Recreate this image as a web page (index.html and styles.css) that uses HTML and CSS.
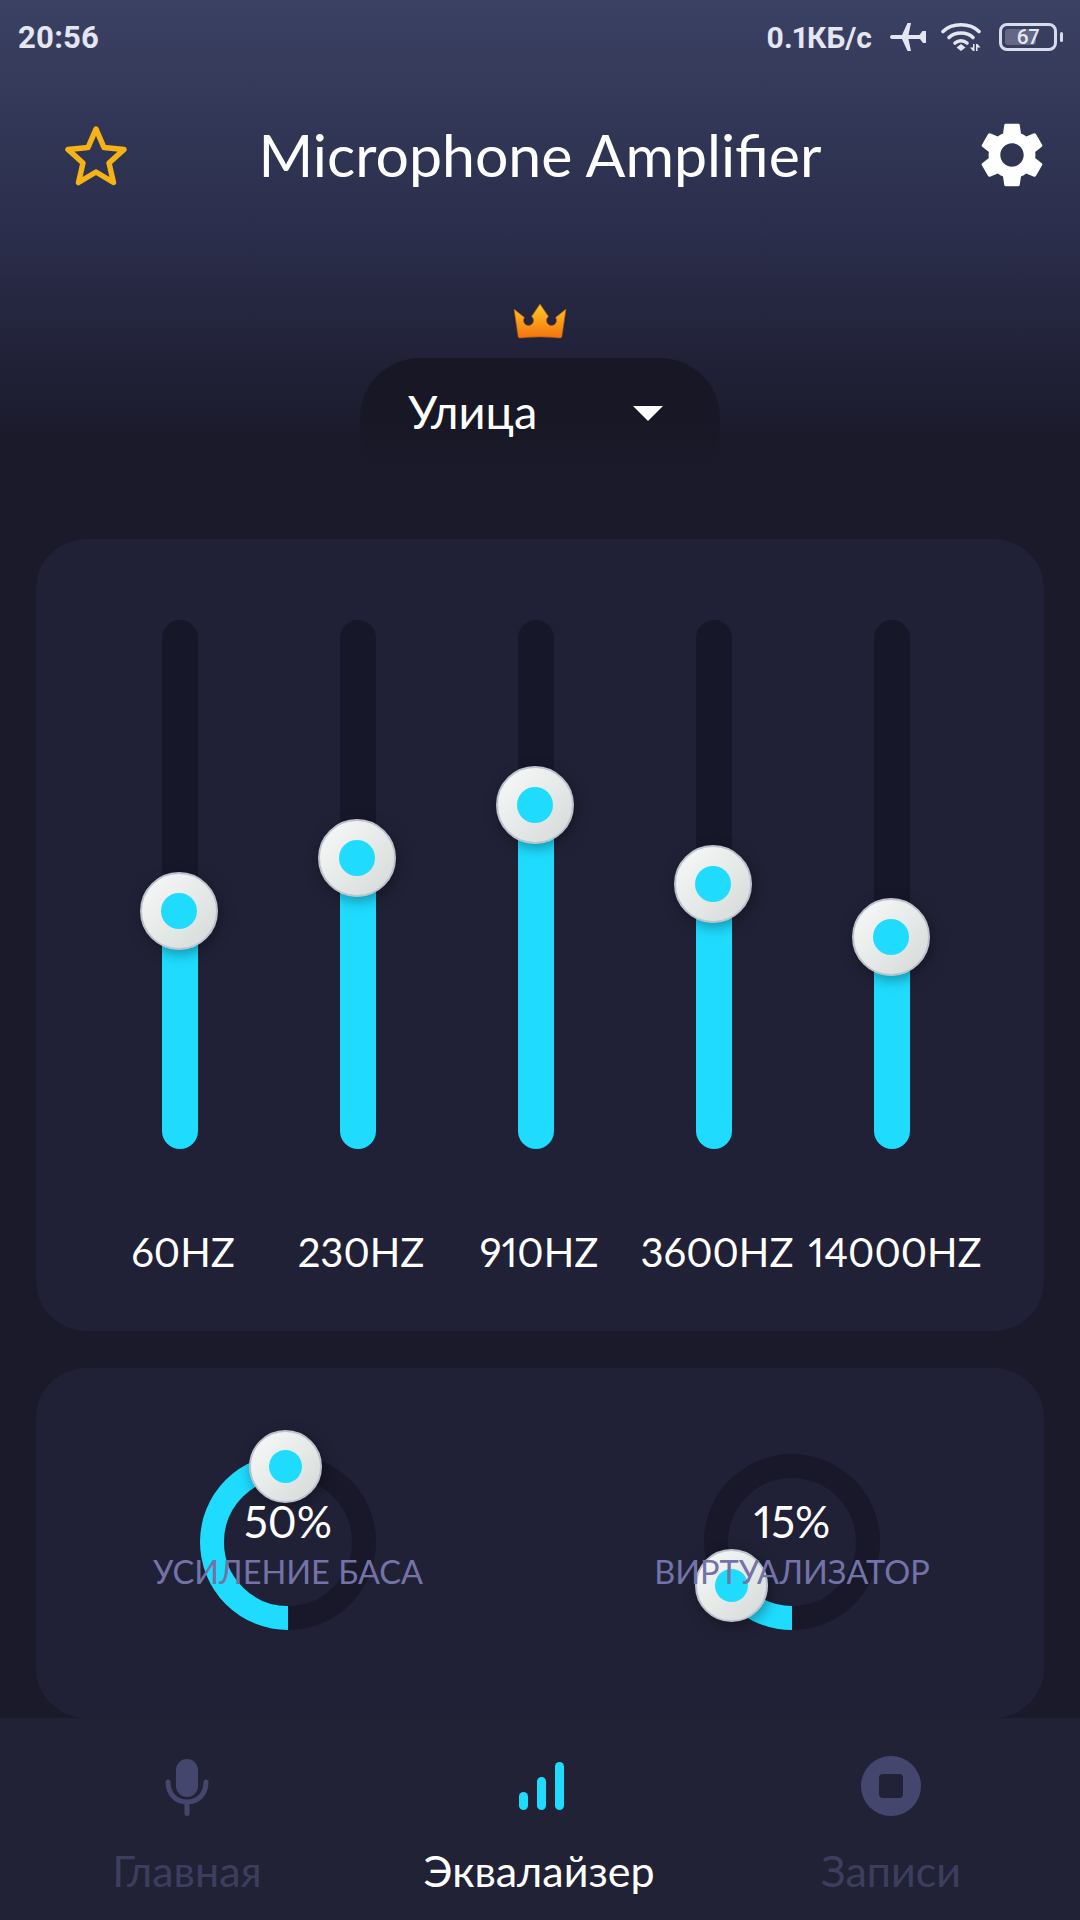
FILE: index.html
```html
<!DOCTYPE html>
<html lang="ru">
<head>
  <meta charset="UTF-8">
  <title>Microphone Amplifier</title>
  <link rel="stylesheet" href="styles.css">
</head>
<body>
  <div class="status">
    <span class="clock">20:56</span>
    <div class="status-right">
      <span class="speed">0.1КБ/с</span>
      <svg class="ic-plane" width="36" height="30" viewBox="0 0 36 30">
        <path fill="#e4e6f2" d="M0 15c0-1.300 1-2 2-2h10L17.500 1h3.500l-2.500 12h11l3-4h3.500v12H33l-3-4H18.500L21 29h-3.500L12 17H2c-1 0-2-.7-2-2z"/>
      </svg>
      <svg class="ic-wifi" width="44" height="30" viewBox="0 0 44 30">
        <g fill="none" stroke="#e4e6f2" stroke-width="3.600" stroke-linecap="round">
          <path d="M2 9.500C11 .5 29 .5 38 9.500"/>
          <path d="M8 15.500c6-6 18-6 24 0"/>
          <path d="M14 21c3.500-3 8.500-3 12 0"/>
        </g>
        <path fill="#e4e6f2" d="M20 22l4.500 3.500L20 29l-4.500-3.500z"/>
        <path fill="#e4e6f2" d="M32 22h1.500v7H32l-3-3.500h3zM35 22h1.500l3 3.500h-3V29H35z"/>
      </svg>
      <div class="battery">
        <div class="battery-body"><span class="battery-level"></span><span class="battery-num">67</span></div>
        <span class="battery-nub"></span>
      </div>
    </div>
  </div>

  <header class="header">
    <svg class="star" width="64" height="62" viewBox="0 0 64 62">
      <path fill="none" stroke="#f5b316" stroke-width="5.500" stroke-linejoin="round" d="M32 5l8 18.500 20 2-15 13.500 4.500 19.500L32 48l-17.500 10.500L19 39 4 25.500l20-2z"/>
    </svg>
    <h1 class="title">Microphone Amplifier</h1>
    <svg class="gear" width="78" height="78" viewBox="0 0 24 24">
      <path fill="#fff" d="M19.140 12.940c.04-.3.06-.61.06-.94 0-.32-.02-.64-.07-.94l2.030-1.580c.18-.14.23-.41.12-.61l-1.920-3.320c-.12-.22-.37-.29-.59-.22l-2.390.96c-.5-.38-1.030-.7-1.620-.94l-.36-2.540c-.04-.24-.24-.41-.48-.41h-3.840c-.24 0-.43.17-.47.41l-.36 2.540c-.59.24-1.130.57-1.620.94l-2.390-.96c-.22-.08-.47 0-.59.22L2.740 8.870c-.12.21-.08.47.12.61l2.030 1.580c-.05.3-.09.63-.09.94s.02.64.07.94l-2.030 1.580c-.18.14-.23.41-.12.61l1.920 3.320c.12.22.37.29.59.22l2.390-.96c.5.38 1.030.7 1.620.94l.36 2.540c.05.24.24.41.48.41h3.840c.24 0 .44-.17.47-.41l.36-2.540c.59-.24 1.130-.56 1.620-.94l2.390.96c.22.08.47 0 .59-.22l1.920-3.320c.12-.22.07-.47-.12-.61l-2.010-1.580zM12 15.600c-1.980 0-3.600-1.620-3.600-3.600s1.620-3.600 3.600-3.600 3.600 1.620 3.600 3.600-1.620 3.600-3.600 3.600z"/>
    </svg>
  </header>

  <div class="crown">
    <svg width="56" height="37" viewBox="0 0 56 37">
      <defs>
        <linearGradient id="crownFill" x1="0" y1="0" x2="0" y2="1">
          <stop offset="0" stop-color="#ffc928"/>
          <stop offset="1" stop-color="#f5720e"/>
        </linearGradient>
      </defs>
      <path fill="url(#crownFill)" stroke="#a8500f" stroke-width=".6" d="M28 1l8.500 12.500a5 5 0 1 0 7 1L54 6l-4 27c-.2 1.500-1 2-2.500 2-13-1.500-26-1.500-39 0-1.500 0-2.300-.5-2.500-2L2 6l10.500 8.500a5 5 0 1 0 7-1z"/>
    </svg>
  </div>

  <div class="preset">
    <span class="preset-name">Улица</span>
    <span class="preset-arrow"></span>
  </div>

  <section class="panel eq">
    <div class="sliders">
      <div class="band">
        <div class="track">
          <div class="fill" style="height: 238px"></div>
          <div class="thumb" style="bottom: 199px"><span class="dot"></span></div>
        </div>
        <span class="band-label">60HZ</span>
      </div>
      <div class="band">
        <div class="track">
          <div class="fill" style="height: 291px"></div>
          <div class="thumb" style="bottom: 252px"><span class="dot"></span></div>
        </div>
        <span class="band-label">230HZ</span>
      </div>
      <div class="band">
        <div class="track">
          <div class="fill" style="height: 344px"></div>
          <div class="thumb" style="bottom: 305px"><span class="dot"></span></div>
        </div>
        <span class="band-label">910HZ</span>
      </div>
      <div class="band">
        <div class="track">
          <div class="fill" style="height: 265px"></div>
          <div class="thumb" style="bottom: 226px"><span class="dot"></span></div>
        </div>
        <span class="band-label">3600HZ</span>
      </div>
      <div class="band">
        <div class="track">
          <div class="fill" style="height: 212px"></div>
          <div class="thumb" style="bottom: 173px"><span class="dot"></span></div>
        </div>
        <span class="band-label">14000HZ</span>
      </div>
    </div>
  </section>

  <section class="panel fx">
    <div class="knob">
      <svg class="ring" width="176" height="176" viewBox="0 0 176 176">
        <circle class="ring-bg" cx="88" cy="88" r="76"/>
        <circle class="ring-value" cx="88" cy="88" r="76" stroke-dasharray="238.800 477.500" transform="rotate(90 88 88)"/>
      </svg>
      <div class="thumb small" style="left: 85px; top: 12px"><span class="dot"></span></div>
      <span class="knob-value">50%</span>
      <span class="knob-label">УСИЛЕНИЕ БАСА</span>
    </div>
    <div class="knob">
      <svg class="ring" width="176" height="176" viewBox="0 0 176 176">
        <circle class="ring-bg" cx="88" cy="88" r="76"/>
        <circle class="ring-value" cx="88" cy="88" r="76" stroke-dasharray="71.600 477.500" transform="rotate(90 88 88)"/>
      </svg>
      <div class="thumb small" style="left: 27px; top: 131px"><span class="dot"></span></div>
      <span class="knob-value">15%</span>
      <span class="knob-label">ВИРТУАЛИЗАТОР</span>
    </div>
  </section>

  <nav class="nav">
    <div class="nav-item">
      <svg width="44" height="60" viewBox="0 0 44 60">
        <rect x="11" y="3" width="22" height="38" rx="11" fill="#44466e"/>
        <path fill="none" stroke="#44466e" stroke-width="5" stroke-linecap="round" d="M3 26c0 12 8 20 19 20s19-8 19-20"/>
        <rect x="19.500" y="45" width="5" height="15" rx="2.500" fill="#44466e"/>
      </svg>
      <span class="nav-label">Главная</span>
    </div>
    <div class="nav-item active">
      <svg width="60" height="60" viewBox="0 0 60 60">
        <rect x="10" y="36" width="9" height="18" rx="4.500" fill="#1fdcff"/>
        <rect x="28" y="21" width="9" height="33" rx="4.500" fill="#1fdcff"/>
        <rect x="46" y="6" width="9" height="48" rx="4.500" fill="#1fdcff"/>
      </svg>
      <span class="nav-label">Эквалайзер</span>
    </div>
    <div class="nav-item">
      <svg width="60" height="60" viewBox="0 0 60 60">
        <circle cx="30" cy="30" r="30" fill="#44466e"/>
        <rect x="18" y="18" width="24" height="24" rx="4" fill="#212236"/>
      </svg>
      <span class="nav-label">Записи</span>
    </div>
  </nav>
</body>
</html>
```

FILE: styles.css
```css
* {
  box-sizing: border-box;
}
html, body {
  margin: 0;
  height: 1920px;
}
body {
  width: 1080px;
  overflow: hidden;
  font-family: Lato, "Noto Sans", sans-serif;
  font-variant-numeric: proportional-nums;
  color: #fff;
  background: linear-gradient(180deg, #3b4163 0, #2b2e4c 230px, #1a1a2b 440px);
  background-color: #1a1a2b;
  display: flex;
  flex-direction: column;
}

/* status bar */
.status {
  height: 74px;
  padding: 0 17px 0 18px;
  display: flex;
  justify-content: space-between;
  align-items: center;
  font-family: Roboto, sans-serif;
  font-weight: 700;
  font-size: 31px;
  color: #e4e6f2;
}
.status-right {
  display: flex;
  align-items: center;
}
.speed {
  font-size: 30px;
}
.ic-plane {
  margin-left: 18px;
}
.ic-wifi {
  margin-left: 15px;
}
.battery {
  margin-left: 14px;
  display: flex;
  align-items: center;
  gap: 3px;
}
.battery-body {
  position: relative;
  width: 58px;
  height: 28px;
  border: 3px solid #d8dbea;
  border-radius: 8px;
  font-size: 21px;
  font-weight: 500;
  line-height: 22px;
  text-align: center;
}
.battery-level {
  position: absolute;
  left: 3px;
  top: 3px;
  bottom: 3px;
  width: 31px;
  border-radius: 3px;
  background: #646885;
}
.battery-num {
  position: relative;
}
.battery-nub {
  width: 3px;
  height: 10px;
  border-radius: 2px;
  background: #d8dbea;
}

/* header */
.header {
  height: 161px;
  padding: 0 29px;
  display: grid;
  grid-template-columns: 1fr auto 1fr;
  align-items: center;
}
.star {
  margin-left: 35px;
}
.title {
  margin: 0;
  font-size: 59px;
  font-weight: 400;
}
.gear {
  justify-self: end;
}
.crown {
  margin-top: 68px;
  height: 37px;
  display: flex;
  justify-content: center;
}
.preset {
  align-self: center;
  margin-top: 18px;
  width: 360px;
  height: 112px;
  padding: 0 57px 6px 48px;
  border-radius: 60px 60px 40px 40px;
  background: linear-gradient(180deg, #171725 0, #171725 60%, #1a1a2b 100%);
  display: flex;
  justify-content: space-between;
  align-items: center;
}
.preset-name {
  font-size: 47px;
}
.preset-arrow {
  border-left: 15px solid transparent;
  border-right: 15px solid transparent;
  border-top: 15px solid #fff;
  margin-top: 4px;
}

/* panels */
.panel {
  margin-left: 36px;
  width: 1008px;
  background: #202136;
  border-radius: 50px;
}
.eq {
  margin-top: 69px;
  height: 792px;
  padding: 81px 0 0 55px;
}
.sliders {
  display: grid;
  grid-template-columns: repeat(5, 178px);
}
.band {
  display: flex;
  flex-direction: column;
  align-items: center;
}
.track {
  position: relative;
  width: 36px;
  height: 529px;
  border-radius: 18px;
  background: #17172a;
}
.fill {
  position: absolute;
  left: 0;
  right: 0;
  bottom: 0;
  border-radius: 18px;
  background: #1fdcff;
}
.thumb {
  position: absolute;
  left: -22px;
  width: 78px;
  height: 78px;
  border-radius: 50%;
  border: 2px solid #bcc3cd;
  background: linear-gradient(135deg, #f8faf9, #d4dad9);
  box-shadow: 2px 4px 14px rgba(0,0,0,0.35);
  display: flex;
  align-items: center;
  justify-content: center;
}
.thumb .dot {
  width: 36px;
  height: 36px;
  border-radius: 50%;
  background: #1fdcff;
}
.thumb.small {
  width: 73px;
  height: 73px;
  margin-left: -36.500px;
  margin-top: -36.500px;
}
.thumb.small .dot {
  width: 33px;
  height: 33px;
}
.band-label {
  margin-top: 79px;
  font-size: 40px;
  white-space: nowrap;
  transform: translateX(3px);
}

.fx {
  margin-top: 37px;
  height: 350px;
  padding: 86px 0 0 164px;
  display: flex;
  gap: 328px;
}
.knob {
  position: relative;
  width: 176px;
  height: 176px;
}
.ring {
  display: block;
}
.ring-bg, .ring-value {
  fill: none;
  stroke-width: 24;
}
.ring-bg {
  stroke: #18182a;
}
.ring-value {
  stroke: #1fdcff;
}
.knob-value, .knob-label {
  position: absolute;
  left: 50%;
  transform: translateX(-50%);
  white-space: nowrap;
}
.knob-value {
  top: 41px;
  font-size: 44px;
}
.knob-label {
  top: 98px;
  font-size: 32.500px;
  color: #7473a8;
}

/* bottom nav */
.nav {
  height: 202px;
  background: #212236;
  padding: 38px 11px 0;
  display: grid;
  grid-template-columns: repeat(3, 352px);
}
.nav-item {
  display: flex;
  flex-direction: column;
  align-items: center;
  gap: 29px;
}
.nav-label {
  font-size: 43px;
  color: #3d3e5e;
}
.nav-item.active .nav-label {
  color: #fff;
}
```
